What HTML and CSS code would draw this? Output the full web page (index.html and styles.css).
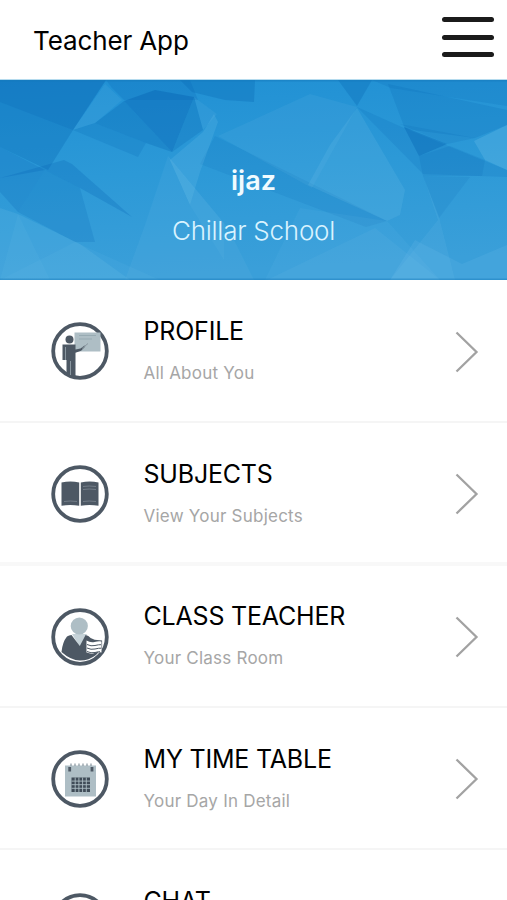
FILE: index.html
```
<!DOCTYPE html>
<html lang="en">
<head>
  <meta charset="UTF-8" />
  <meta name="viewport" content="width=device-width, initial-scale=1.0"/>
  <title>Teacher App</title>
  <link rel="stylesheet" href="styles.css">
</head>
<body>
  <header class="topbar">
    <h1>Teacher App</h1>
    <button class="menu-button" aria-label="Menu">
      <span></span>
      <span></span>
      <span></span>
    </button>
  </header>

  <div class="banner">
    <svg class="banner-bg" viewBox="0 0 507 200" preserveAspectRatio="none" aria-hidden="true">
      <defs>
        <linearGradient id="sky" x1="0" y1="0" x2="0.15" y2="1">
          <stop offset="0" stop-color="#2090d4"/>
          <stop offset="0.5" stop-color="#2c99d7"/>
          <stop offset="1" stop-color="#3a9fd9"/>
        </linearGradient>
      </defs>
      <rect width="507" height="200" fill="url(#sky)"/>
      <g fill="#0866b4">
        <polygon points="0,0 106,0 73,50 48,90 0,67" opacity="0.3"/>
        <polygon points="0,0 106,0 73,50 0,22" opacity="0.2"/>
        <polygon points="106,0 190,0 198,20 124,20 112,8" opacity="0.22"/>
        <polygon points="0,98 64,80 72,84 132,137 80,108 45,90" opacity="0.26"/>
        <polygon points="0,67 45,90 18,132 0,112" opacity="0.22"/>
        <polygon points="45,90 80,108 95,162 75,162 18,132" opacity="0.18"/>
        <polygon points="73,50 95,43 146,63 138,77" opacity="0.18"/>
        <polygon points="95,43 124,21 172,72 146,63" opacity="0.3"/>
        <polygon points="124,21 155,10 194,17 172,72" opacity="0.46"/>
        <polygon points="194,17 203,50 172,72" opacity="0.25"/>
        <polygon points="180,0 255,0 254,22 225,20 192,12" opacity="0.3"/>
        <polygon points="215,56 387,141 366,147 200,84" opacity="0.13"/>
        <polygon points="338,0 372,0 357,26" opacity="0.3"/>
        <polygon points="372,0 507,0 507,26 391,8" opacity="0.16"/>
        <polygon points="388,4 507,30 507,45 475,58 405,49" opacity="0.18"/>
        <polygon points="357,27 404,48 507,90 507,97 423,94" opacity="0.16"/>
        <polygon points="404,47 447,64 419,76" opacity="0.4"/>
        <polygon points="400,44 475,58 447,64" opacity="0.14"/>
        <polygon points="419,76 450,66 485,80 482,96 423,96" opacity="0.14"/>
        <polygon points="423,96 470,97 439,138" opacity="0.12"/>
      </g>
      <g fill="#7cc8ee">
        <polygon points="73,50 105,4 122,20 95,43" opacity="0.1"/>
        <polygon points="194,17 217,34 203,50" opacity="0.1"/>
        <polygon points="203,52 214,34 218,42 200,92 190,125 170,80" opacity="0.18"/>
        <polygon points="168,76 228,148 254,200 125,200 145,145" opacity="0.1"/>
        <polygon points="168,76 224,143 224,180 190,125" opacity="0.08"/>
        <polygon points="218,56 310,14 357,27 322,90 312,108" opacity="0.1"/>
        <polygon points="357,28 405,110 400,135 387,141 308,105 330,65" opacity="0.16"/>
        <polygon points="0,128 18,134 80,164 130,200 0,200" opacity="0.16"/>
        <polygon points="0,200 75,162 160,200" opacity="0.08"/>
        <polygon points="18,134 50,200 0,200" opacity="0.08"/>
        <polygon points="265,200 300,128 387,141 440,200" opacity="0.08"/>
        <polygon points="267,200 375,148 440,200" opacity="0.1"/>
        <polygon points="424,98 439,137 455,200 390,200 438,140" opacity="0.12"/>
        <polygon points="507,45 474,61 485,80 507,90" opacity="0.24"/>
        <polygon points="507,165 462,184 415,160 390,200 507,200" opacity="0.14"/>
      </g>
      <rect width="507" height="1.5" fill="#1679bb" opacity="0.5"/>
      <rect y="198.5" width="507" height="1.5" fill="#1679bb" opacity="0.45"/>
    </svg>
    <div class="user-name">ijaz</div>
    <div class="school-name">Chillar School</div>
  </div>

  <div class="menu-list">
    <a class="menu-item">
      <svg class="item-icon" viewBox="0 0 58 58">
        <circle cx="29" cy="29" r="26.8" fill="none" stroke="#4d5864" stroke-width="3.8"/>
        <rect x="23.5" y="10.5" width="26" height="19" fill="#aebec5"/>
        <path d="M28 13.5h17M28 17h13" stroke="#98abb3" stroke-width="1"/>
        <circle cx="18.5" cy="17.5" r="4" fill="#4d5864"/>
        <path d="M11.5 22.5h13v5l5-1 4-3 .8 1-4.2 4.3-5.6 2V54h-9V38h-4z" fill="#4d5864"/>
        <path d="M31 26.5l6-5M14.5 25v13M19.5 39v14" stroke="#8a97a0" stroke-width="1"/>
      </svg>
      <div class="item-text">
        <h2>PROFILE</h2>
        <p>All About You</p>
      </div>
      <svg class="chevron" viewBox="0 0 24 42"><path d="M1.5 1.5L21.5 21L1.5 40.5"/></svg>
    </a>

    <a class="menu-item">
      <svg class="item-icon" viewBox="0 0 58 58">
        <circle cx="29" cy="29" r="26.8" fill="none" stroke="#4d5864" stroke-width="3.8"/>
        <path d="M10.5 17.5q9-2 17.7 0v23.3q-9-1.5-17.7 0zM29.8 17.5q9-2 17.7 0v23.3q-9-1.5-17.7 0z" fill="#4d5864"/>
        <path d="M32 21.5q6-1 13 0M32 24.5q6-1 13 0M13 36.5q6-1 13 0M32 36.5q6-1 13 0" fill="none" stroke="#7c8791" stroke-width=".8"/>
      </svg>
      <div class="item-text">
        <h2>SUBJECTS</h2>
        <p>View Your Subjects</p>
      </div>
      <svg class="chevron" viewBox="0 0 24 42"><path d="M1.5 1.5L21.5 21L1.5 40.5"/></svg>
    </a>

    <a class="menu-item">
      <svg class="item-icon" viewBox="0 0 58 58">
        <circle cx="29" cy="29" r="26.8" fill="none" stroke="#4d5864" stroke-width="3.8"/>
        <path d="M21 26h15l-7 13z" fill="#c5d2d8"/>
        <circle cx="28.3" cy="18" r="8.6" fill="#aebec5"/>
        <path d="M20.5 27l8.3 11 5.8-11q3 .3 5 3l4 1.8 7.5.6v8L45 47q-7 5.5-16 5.5T10.5 44q1-10 5.5-15.5 2-1.5 4.5-1.5z" fill="#4d5864"/>
        <path d="M35.5 32.5q4 2.5 8 1.5t7-.5v11q-4-1-7 .5t-8-.5z" fill="#fff"/>
        <path d="M36 36.5q4 2 8 1t6-.8M36 40q4 2 8 1t6-.8M36 43.5q4 2 8 1t5-.8" fill="none" stroke="#4d5864" stroke-width="1"/>
      </svg>
      <div class="item-text">
        <h2>CLASS TEACHER</h2>
        <p>Your Class Room</p>
      </div>
      <svg class="chevron" viewBox="0 0 24 42"><path d="M1.5 1.5L21.5 21L1.5 40.5"/></svg>
    </a>

    <a class="menu-item">
      <svg class="item-icon" viewBox="0 0 58 58">
        <circle cx="29" cy="29" r="26.8" fill="none" stroke="#4d5864" stroke-width="3.8"/>
        <rect x="14" y="15.5" width="31" height="31" fill="#aebec5"/>
        <path d="M20 16v-2.5M24 16v-2.5M28 16v-2.5M32 16v-2.5M36 16v-2.5M40 16v-2.5" stroke="#87959e" stroke-width="1.2"/>
        <path d="M18.7 17v4.5M41 17v4.5" stroke="#4d5864" stroke-width="2.8"/>
        <rect x="20.5" y="27.5" width="18.5" height="14.5" fill="#3f4b57"/>
        <path d="M24.2 27.5V42M27.9 27.5V42M31.6 27.5V42M35.3 27.5V42M20.5 31.1H39M20.5 34.7H39M20.5 38.3H39" stroke="#aebec5" stroke-width=".9"/>
      </svg>
      <div class="item-text">
        <h2>MY TIME TABLE</h2>
        <p>Your Day In Detail</p>
      </div>
      <svg class="chevron" viewBox="0 0 24 42"><path d="M1.5 1.5L21.5 21L1.5 40.5"/></svg>
    </a>

    <a class="menu-item">
      <svg class="item-icon" viewBox="0 0 58 58">
        <circle cx="29" cy="29" r="26.8" fill="none" stroke="#4d5864" stroke-width="3.8"/>
      </svg>
      <div class="item-text">
        <h2>CHAT</h2>
      </div>
    </a>
  </div>
</body>
</html>
```
FILE: styles.css
```
* {
  margin: 0;
  padding: 0;
  box-sizing: border-box;
  font-family: Inter, 'Liberation Sans', sans-serif;
}
body {
  background: #ffffff;
  height: 100vh;
  overflow: hidden;
}
.topbar {
  height: 80px;
  padding: 0 13px 0 33px;
  display: flex;
  justify-content: space-between;
  align-items: center;
  border-bottom: 1px solid #b5dbee;
}
.topbar h1 {
  font-size: 26px;
  font-weight: 400;
  line-height: 32px;
  letter-spacing: -0.12px;
  color: #000;
  margin-top: 2px;
}
.menu-button {
  width: 52px;
  margin-bottom: 5px;
  display: flex;
  flex-direction: column;
  gap: 12.5px;
  background: none;
  border: none;
}
.menu-button span {
  height: 5px;
  border-radius: 3px;
  background: #1b1b1b;
}
.banner {
  position: relative;
  height: 200px;
  padding-top: 84px;
  text-align: center;
  color: #f0fbff;
}
.banner-bg {
  position: absolute;
  top: 0;
  left: 0;
  width: 100%;
  height: 100%;
}
.user-name {
  position: relative;
  font-size: 27px;
  font-weight: 600;
  line-height: 34px;
}
.school-name {
  position: relative;
  margin-top: 16px;
  font-size: 26px;
  font-weight: 300;
  line-height: 34px;
  letter-spacing: -0.25px;
  color: #d9f3ff;
}
.menu-item {
  height: 142.6px;
  padding: 0 28px 0 51px;
  display: flex;
  align-items: flex-start;
  border-bottom: 2px solid #f5f5f5;
}
.menu-item:nth-child(2) {
  height: 143.6px;
  border-bottom: 4px solid #f8f8f8;
}
.menu-item:nth-child(3) {
  height: 142.6px;
  margin-top: -1px;
}
.item-icon {
  width: 58px;
  height: 58px;
  margin-top: 42.4px;
  flex-shrink: 0;
}
.item-text {
  flex: 1;
  margin: 34px 0 0 34.5px;
}
.item-text h2 {
  font-size: 25px;
  font-weight: 400;
  line-height: 34px;
  letter-spacing: -0.2px;
  color: #000;
}
.item-text p {
  margin-top: 13px;
  font-size: 17px;
  line-height: 24px;
  letter-spacing: 0.23px;
  color: #a6a6a6;
}
.chevron {
  width: 24px;
  height: 42px;
  margin-top: 50.5px;
  fill: none;
  stroke: #a2a2a2;
  stroke-width: 2.3;
}
```
